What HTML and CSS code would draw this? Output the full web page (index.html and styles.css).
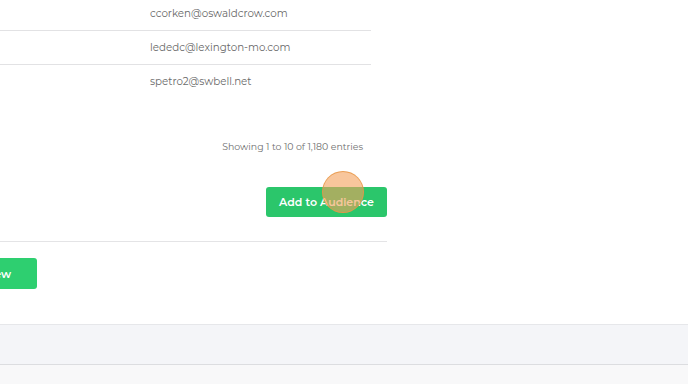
FILE: index.html
```html
<!DOCTYPE html>
<html lang="en">
<head>
    <meta charset="UTF-8">
    <meta name="viewport" content="width=device-width, initial-scale=1.0">
    <title>Contacts</title>
    <link rel="stylesheet" href="styles.css">
</head>
<body>
    <div class="scroller">
        <div class="card">
            <table class="contacts">
                <tr><td class="name"></td><td>ccorken@oswaldcrow.com</td></tr>
                <tr><td class="name"></td><td>lededc@lexington-mo.com</td></tr>
                <tr class="last"><td class="name"></td><td>spetro2@swbell.net</td></tr>
            </table>

            <div class="info">Showing 1 to 10 of 1,180 entries</div>

            <div class="actions">
                <button class="btn btn-add">Add to Audience
                    <!-- click marker -->
                    <span class="click-dot"></span>
                </button>
            </div>
        </div>

        <div class="below">
            <button class="btn btn-new">Create New</button>
        </div>
    </div>

    <footer class="footer"></footer>
    <div class="bottom"></div>
</body>
</html>
```

FILE: styles.css
```css
body {
    margin: 0;
    height: 384px;
    overflow: hidden;
    background: #ffffff;
    font-family: "Montserrat", "Noto Sans", "DejaVu Sans", sans-serif;
    color: #666;
}

/* content is scrolled a bit to the right */
.scroller {
    margin-left: -80px;
    width: 467px;
}

.card {
    border-bottom: 1px solid #e4e4e6;
    padding-bottom: 24px;
}

.contacts {
    width: 451px;
    margin-top: -3px;
    border-collapse: collapse;
}

.contacts td {
    height: 33px;
    padding: 0;
    font-size: 10.3px;
    color: #6a6a6a;
    border-bottom: 1px solid #e2e2e4;
}

.contacts .last td {
    border-bottom: none;
}

.contacts .name {
    width: 230px;
}

.info {
    margin-top: 42px;
    padding-right: 24px;
    text-align: right;
    font-size: 9.4px;
    line-height: 14px;
    color: #6f6f6f;
}

.actions {
    margin-top: 33px;
    display: flex;
    justify-content: flex-end;
}

.btn {
    border: none;
    border-radius: 3px;
    background: #2bc66b;
    color: #fff;
    font-family: inherit;
    font-weight: 600;
    font-size: 11px;
    cursor: pointer;
}

.btn-add {
    position: relative;
    width: 121px;
    height: 30px;
    padding: 0;
}

.click-dot {
    position: absolute;
    left: 56px;
    top: -16px;
    width: 40px;
    height: 40px;
    border-radius: 50%;
    background: rgba(244, 160, 90, 0.6);
    border: 1.5px solid rgba(232, 150, 70, 0.85);
}

.below {
    padding-top: 16px;
}

.btn-new {
    width: 117px;
    height: 31px;
    background: #2ecf70;
    text-align: right;
    padding-right: 26px;
}

.footer {
    margin-top: 35px;
    height: 39px;
    background: #f4f5f8;
    border-top: 1px solid #e6e7ea;
    border-bottom: 1px solid #dcdde0;
}

.bottom {
    height: 20px;
    background: #f8f8f9;
}
```
